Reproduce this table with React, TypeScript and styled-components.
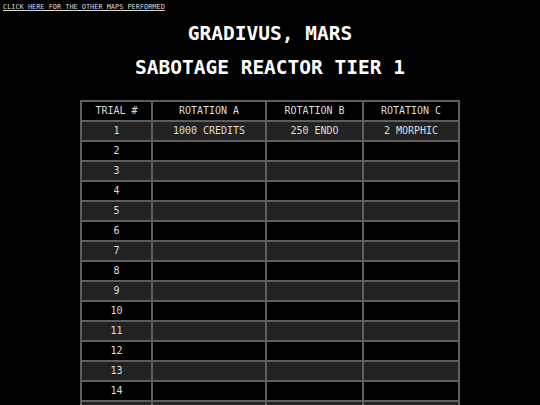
import React from "react";
import styled, { createGlobalStyle } from "styled-components";

const Global = createGlobalStyle`
  html, body { margin: 0; padding: 0; background: #000; }
  body { font-family: "DejaVu Sans Mono", "Liberation Mono", monospace; color: #e6e6e6; }
`;

const Page = styled.div`
  display: flex;
  flex-direction: column;
  padding: 2px 3px 0;
`;

const TopLink = styled.a`
  align-self: flex-start;
  font-size: 6.9px;
  line-height: 10px;
  color: #d8d8d8;
  text-decoration: underline;
  cursor: pointer;
`;

const Title = styled.h1<{ $top: number }>`
  margin: ${(p) => p.$top}px 0 0;
  text-align: center;
  font-size: 19.5px;
  line-height: 24px;
  font-weight: bold;
  color: #ffffff;
`;

const Table = styled.table`
  margin: 20px auto 0;
  border-collapse: separate;
  border-spacing: 0;
  table-layout: fixed;
  width: 378px;
  border-top: 2px solid #5e5e5e;
  border-left: 2px solid #5e5e5e;
`;

const Cell = styled.td`
  box-sizing: content-box;
  height: 18px;
  padding: 0;
  border-right: 2px solid #5e5e5e;
  border-bottom: 2px solid #5e5e5e;
  text-align: center;
  vertical-align: middle;
  font-size: 10px;
  line-height: 18px;
  color: #dcdcdc;
  white-space: nowrap;
`;

const Head = styled(Cell).attrs({ as: "th" })<{ $w: number }>`
  width: ${(p) => p.$w}px;
  font-weight: normal;
  background: #000;
`;

const Row = styled.tr<{ $odd: boolean }>`
  background: ${(p) => (p.$odd ? "#222222" : "#000000")};
`;

const rows: [string, string, string][] = [["1000 CREDITS", "250 ENDO", "2 MORPHIC"]];

export default function App() {
  const data = Array.from({ length: 20 }, (_, i) => rows[i] ?? ["", "", ""]);
  return (
    <Page>
      <Global />
      <TopLink>CLICK HERE FOR THE OTHER MAPS PERFORMED</TopLink>
      <Title $top={10}>GRADIVUS, MARS</Title>
      <Title $top={10}>SABOTAGE REACTOR TIER 1</Title>
      <Table>
        <thead>
          <tr>
            <Head $w={69}>TRIAL #</Head>
            <Head $w={112}>ROTATION A</Head>
            <Head $w={95}>ROTATION B</Head>
            <Head $w={94}>ROTATION C</Head>
          </tr>
        </thead>
        <tbody>
          {data.map((r, i) => (
            <Row key={i} $odd={i % 2 === 0}>
              <Cell>{i + 1}</Cell>
              <Cell>{r[0]}</Cell>
              <Cell>{r[1]}</Cell>
              <Cell>{r[2]}</Cell>
            </Row>
          ))}
        </tbody>
      </Table>
    </Page>
  );
}
